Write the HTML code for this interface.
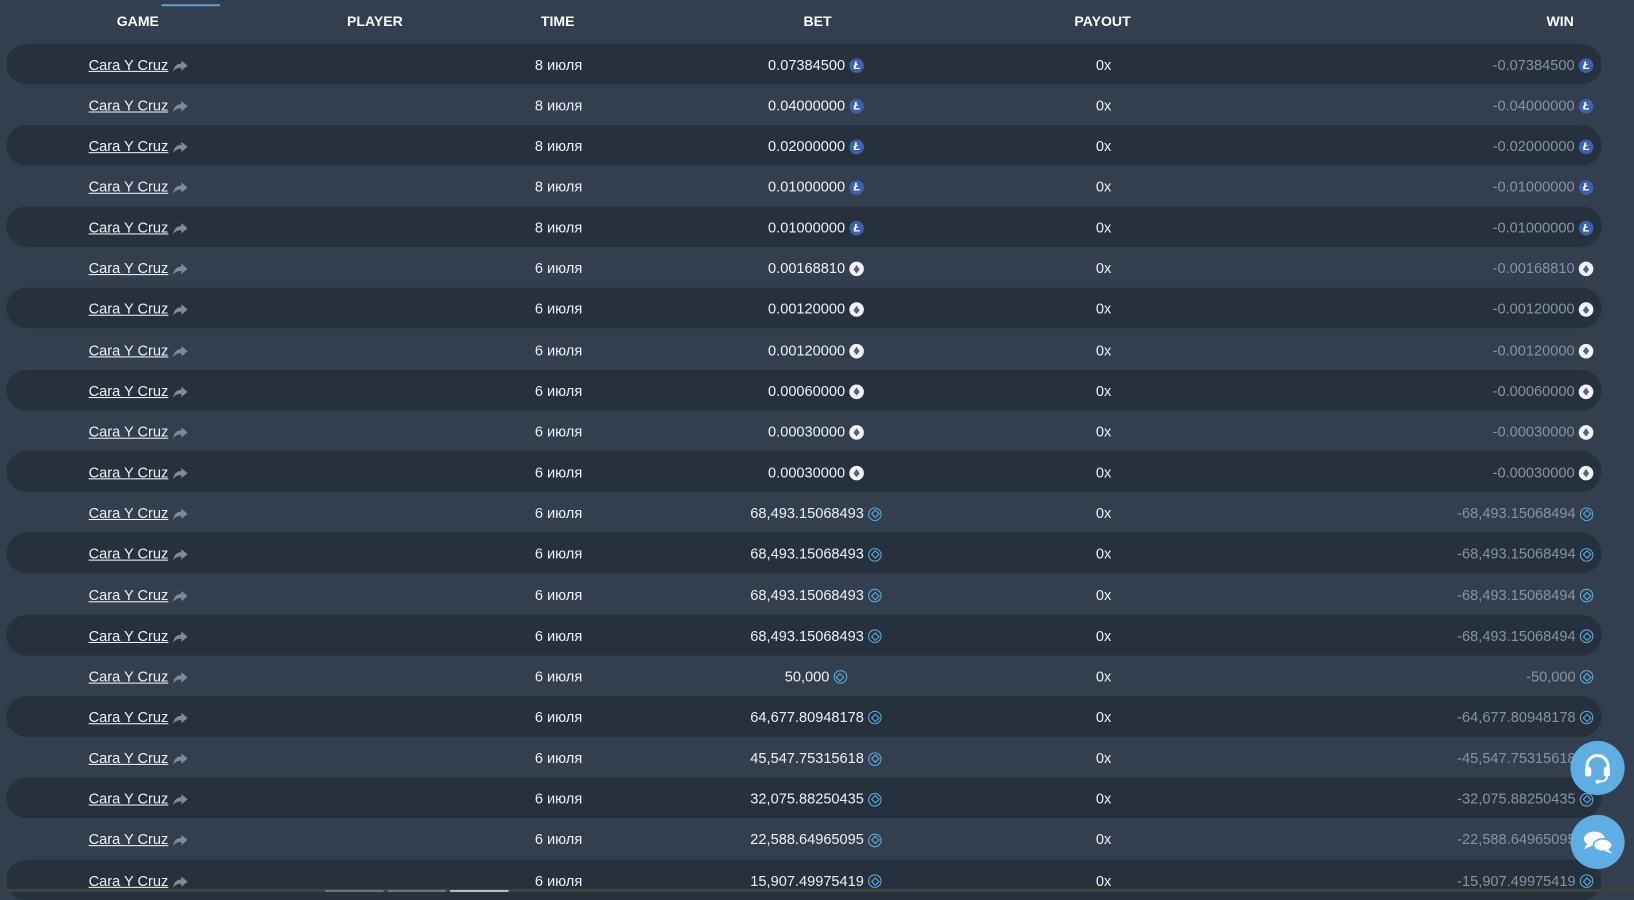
<!DOCTYPE html>
<html><head><meta charset="utf-8"><style>
html,body{margin:0;padding:0;width:1634px;height:892px;overflow:hidden;background:#333f4e;}
#w{position:absolute;left:0;top:0;width:1568px;height:856px;transform:scale(1.04209);transform-origin:0 0;font-family:"Liberation Sans","DejaVu Sans",sans-serif;font-size:14px;color:#eef1f4;}
.h{position:absolute;top:13px;font-weight:bold;font-size:13.5px;color:#fff;}
.r{position:absolute;left:6px;width:1531px;height:39px;border-radius:20px;}
.d{background:#27313e;}
.g{position:absolute;left:79px;top:12px;text-decoration:underline;color:#f0f3f6;}
.g svg{vertical-align:-2px;margin-left:4px}
.t{position:absolute;left:480px;width:100px;text-align:center;top:12px;}
.b{position:absolute;left:627px;width:300px;top:12px;display:flex;justify-content:center;align-items:center;}
.p{position:absolute;left:1003px;width:100px;text-align:center;top:12px;}
.w{position:absolute;right:8px;top:12px;display:flex;align-items:center;color:#8693a2;}
.i{display:inline-block;width:14px;height:14px;border-radius:50%;margin-left:4px;position:relative;top:1px;}
.l{background:#3b62ad;}
.l:after{content:"Ł";position:absolute;left:4px;top:0px;font-size:11px;font-weight:bold;font-style:italic;color:#fff;line-height:14px;}
.e{background:#f2f3f6;}
.e:after{content:"";position:absolute;left:4px;top:3px;width:6px;height:8px;background:#5b5f7a;clip-path:polygon(50% 0,100% 55%,50% 100%,0 55%);}
.x{border:1.5px solid #5aaee6;width:11px;height:11px;}
.x:after{content:"";position:absolute;left:2.5px;top:2.5px;width:4px;height:4px;border:1.3px solid #5aaee6;transform:rotate(45deg);}
.c{position:absolute;left:1507px;width:52px;height:52px;border-radius:50%;background:#5eaee3;}
</style></head><body><div id="w">
<div style="position:absolute;left:155px;top:4px;width:56px;height:2px;background:#5b9fd6"></div>
<div class="h" style="left:112px">GAME</div>
<div class="h" style="left:333px">PLAYER</div>
<div class="h" style="left:519px">TIME</div>
<div class="h" style="left:771px">BET</div>
<div class="h" style="left:1031px">PAYOUT</div>
<div class="h" style="left:1484px">WIN</div>

<div class="r d" style="top:41.5px"><span class="g">Cara Y Cruz<svg width="14" height="11" viewBox="0 0 14 11"><path d="M8 0l6 5-6 5V7C4 7 2 8 0 11 1 6 3 3 8 3z" fill="#7f8b98"/></svg></span><span class="t">8 июля</span><span class="b">0.07384500<i class="i l"></i></span><span class="p">0x</span><span class="w">-0.07384500<i class="i l"></i></span></div>
<div class="r" style="top:80.7px"><span class="g">Cara Y Cruz<svg width="14" height="11" viewBox="0 0 14 11"><path d="M8 0l6 5-6 5V7C4 7 2 8 0 11 1 6 3 3 8 3z" fill="#7f8b98"/></svg></span><span class="t">8 июля</span><span class="b">0.04000000<i class="i l"></i></span><span class="p">0x</span><span class="w">-0.04000000<i class="i l"></i></span></div>
<div class="r d" style="top:119.8px"><span class="g">Cara Y Cruz<svg width="14" height="11" viewBox="0 0 14 11"><path d="M8 0l6 5-6 5V7C4 7 2 8 0 11 1 6 3 3 8 3z" fill="#7f8b98"/></svg></span><span class="t">8 июля</span><span class="b">0.02000000<i class="i l"></i></span><span class="p">0x</span><span class="w">-0.02000000<i class="i l"></i></span></div>
<div class="r" style="top:159px"><span class="g">Cara Y Cruz<svg width="14" height="11" viewBox="0 0 14 11"><path d="M8 0l6 5-6 5V7C4 7 2 8 0 11 1 6 3 3 8 3z" fill="#7f8b98"/></svg></span><span class="t">8 июля</span><span class="b">0.01000000<i class="i l"></i></span><span class="p">0x</span><span class="w">-0.01000000<i class="i l"></i></span></div>
<div class="r d" style="top:198.1px"><span class="g">Cara Y Cruz<svg width="14" height="11" viewBox="0 0 14 11"><path d="M8 0l6 5-6 5V7C4 7 2 8 0 11 1 6 3 3 8 3z" fill="#7f8b98"/></svg></span><span class="t">8 июля</span><span class="b">0.01000000<i class="i l"></i></span><span class="p">0x</span><span class="w">-0.01000000<i class="i l"></i></span></div>
<div class="r" style="top:237.3px"><span class="g">Cara Y Cruz<svg width="14" height="11" viewBox="0 0 14 11"><path d="M8 0l6 5-6 5V7C4 7 2 8 0 11 1 6 3 3 8 3z" fill="#7f8b98"/></svg></span><span class="t">6 июля</span><span class="b">0.00168810<i class="i e"></i></span><span class="p">0x</span><span class="w">-0.00168810<i class="i e"></i></span></div>
<div class="r d" style="top:276.4px"><span class="g">Cara Y Cruz<svg width="14" height="11" viewBox="0 0 14 11"><path d="M8 0l6 5-6 5V7C4 7 2 8 0 11 1 6 3 3 8 3z" fill="#7f8b98"/></svg></span><span class="t">6 июля</span><span class="b">0.00120000<i class="i e"></i></span><span class="p">0x</span><span class="w">-0.00120000<i class="i e"></i></span></div>
<div class="r" style="top:315.6px"><span class="g">Cara Y Cruz<svg width="14" height="11" viewBox="0 0 14 11"><path d="M8 0l6 5-6 5V7C4 7 2 8 0 11 1 6 3 3 8 3z" fill="#7f8b98"/></svg></span><span class="t">6 июля</span><span class="b">0.00120000<i class="i e"></i></span><span class="p">0x</span><span class="w">-0.00120000<i class="i e"></i></span></div>
<div class="r d" style="top:354.7px"><span class="g">Cara Y Cruz<svg width="14" height="11" viewBox="0 0 14 11"><path d="M8 0l6 5-6 5V7C4 7 2 8 0 11 1 6 3 3 8 3z" fill="#7f8b98"/></svg></span><span class="t">6 июля</span><span class="b">0.00060000<i class="i e"></i></span><span class="p">0x</span><span class="w">-0.00060000<i class="i e"></i></span></div>
<div class="r" style="top:393.9px"><span class="g">Cara Y Cruz<svg width="14" height="11" viewBox="0 0 14 11"><path d="M8 0l6 5-6 5V7C4 7 2 8 0 11 1 6 3 3 8 3z" fill="#7f8b98"/></svg></span><span class="t">6 июля</span><span class="b">0.00030000<i class="i e"></i></span><span class="p">0x</span><span class="w">-0.00030000<i class="i e"></i></span></div>
<div class="r d" style="top:433px"><span class="g">Cara Y Cruz<svg width="14" height="11" viewBox="0 0 14 11"><path d="M8 0l6 5-6 5V7C4 7 2 8 0 11 1 6 3 3 8 3z" fill="#7f8b98"/></svg></span><span class="t">6 июля</span><span class="b">0.00030000<i class="i e"></i></span><span class="p">0x</span><span class="w">-0.00030000<i class="i e"></i></span></div>
<div class="r" style="top:472.2px"><span class="g">Cara Y Cruz<svg width="14" height="11" viewBox="0 0 14 11"><path d="M8 0l6 5-6 5V7C4 7 2 8 0 11 1 6 3 3 8 3z" fill="#7f8b98"/></svg></span><span class="t">6 июля</span><span class="b">68,493.15068493<i class="i x"></i></span><span class="p">0x</span><span class="w">-68,493.15068494<i class="i x"></i></span></div>
<div class="r d" style="top:511.3px"><span class="g">Cara Y Cruz<svg width="14" height="11" viewBox="0 0 14 11"><path d="M8 0l6 5-6 5V7C4 7 2 8 0 11 1 6 3 3 8 3z" fill="#7f8b98"/></svg></span><span class="t">6 июля</span><span class="b">68,493.15068493<i class="i x"></i></span><span class="p">0x</span><span class="w">-68,493.15068494<i class="i x"></i></span></div>
<div class="r" style="top:550.5px"><span class="g">Cara Y Cruz<svg width="14" height="11" viewBox="0 0 14 11"><path d="M8 0l6 5-6 5V7C4 7 2 8 0 11 1 6 3 3 8 3z" fill="#7f8b98"/></svg></span><span class="t">6 июля</span><span class="b">68,493.15068493<i class="i x"></i></span><span class="p">0x</span><span class="w">-68,493.15068494<i class="i x"></i></span></div>
<div class="r d" style="top:589.6px"><span class="g">Cara Y Cruz<svg width="14" height="11" viewBox="0 0 14 11"><path d="M8 0l6 5-6 5V7C4 7 2 8 0 11 1 6 3 3 8 3z" fill="#7f8b98"/></svg></span><span class="t">6 июля</span><span class="b">68,493.15068493<i class="i x"></i></span><span class="p">0x</span><span class="w">-68,493.15068494<i class="i x"></i></span></div>
<div class="r" style="top:628.8px"><span class="g">Cara Y Cruz<svg width="14" height="11" viewBox="0 0 14 11"><path d="M8 0l6 5-6 5V7C4 7 2 8 0 11 1 6 3 3 8 3z" fill="#7f8b98"/></svg></span><span class="t">6 июля</span><span class="b">50,000<i class="i x"></i></span><span class="p">0x</span><span class="w">-50,000<i class="i x"></i></span></div>
<div class="r d" style="top:667.9px"><span class="g">Cara Y Cruz<svg width="14" height="11" viewBox="0 0 14 11"><path d="M8 0l6 5-6 5V7C4 7 2 8 0 11 1 6 3 3 8 3z" fill="#7f8b98"/></svg></span><span class="t">6 июля</span><span class="b">64,677.80948178<i class="i x"></i></span><span class="p">0x</span><span class="w">-64,677.80948178<i class="i x"></i></span></div>
<div class="r" style="top:707.1px"><span class="g">Cara Y Cruz<svg width="14" height="11" viewBox="0 0 14 11"><path d="M8 0l6 5-6 5V7C4 7 2 8 0 11 1 6 3 3 8 3z" fill="#7f8b98"/></svg></span><span class="t">6 июля</span><span class="b">45,547.75315618<i class="i x"></i></span><span class="p">0x</span><span class="w">-45,547.75315618<i class="i x"></i></span></div>
<div class="r d" style="top:746.2px"><span class="g">Cara Y Cruz<svg width="14" height="11" viewBox="0 0 14 11"><path d="M8 0l6 5-6 5V7C4 7 2 8 0 11 1 6 3 3 8 3z" fill="#7f8b98"/></svg></span><span class="t">6 июля</span><span class="b">32,075.88250435<i class="i x"></i></span><span class="p">0x</span><span class="w">-32,075.88250435<i class="i x"></i></span></div>
<div class="r" style="top:785.4px"><span class="g">Cara Y Cruz<svg width="14" height="11" viewBox="0 0 14 11"><path d="M8 0l6 5-6 5V7C4 7 2 8 0 11 1 6 3 3 8 3z" fill="#7f8b98"/></svg></span><span class="t">6 июля</span><span class="b">22,588.64965095<i class="i x"></i></span><span class="p">0x</span><span class="w">-22,588.64965095<i class="i x"></i></span></div>
<div class="r d" style="top:824.5px"><span class="g">Cara Y Cruz<svg width="14" height="11" viewBox="0 0 14 11"><path d="M8 0l6 5-6 5V7C4 7 2 8 0 11 1 6 3 3 8 3z" fill="#7f8b98"/></svg></span><span class="t">6 июля</span><span class="b">15,907.49975419<i class="i x"></i></span><span class="p">0x</span><span class="w">-15,907.49975419<i class="i x"></i></span></div>

<div style="position:absolute;left:0;top:853px;width:1568px;height:3px;background:#3d4537"></div>
<div style="position:absolute;left:312px;top:854px;width:56px;height:2px;background:#6e756c"></div>
<div style="position:absolute;left:372px;top:854px;width:56px;height:2px;background:#6e756c"></div>
<div style="position:absolute;left:432px;top:854px;width:56px;height:2px;background:#b8bdb6"></div>

<div class="c" style="top:711px"><svg width="52" height="52" viewBox="0 0 52 52"><path d="M16 28v-4a10 10 0 0 1 20 0v4" fill="none" stroke="#fff" stroke-width="3"/><rect x="14" y="25" width="6" height="9" rx="2" fill="#fff"/><rect x="32" y="25" width="6" height="9" rx="2" fill="#fff"/><path d="M35 34c0 4-4 5-8 5" fill="none" stroke="#fff" stroke-width="2"/><circle cx="26" cy="39" r="2" fill="#fff"/></svg></div>
<div class="c" style="top:782px"><svg width="52" height="52" viewBox="0 0 52 52"><ellipse cx="23" cy="23" rx="10" ry="7" fill="#fff"/><path d="M16 28l-3 5 7-3z" fill="#fff"/><ellipse cx="31" cy="29" rx="9" ry="6" fill="#fff" stroke="#5eaee3" stroke-width="1.5"/><path d="M36 33l4 4-7-2z" fill="#fff"/></svg></div>
</div></body></html>
